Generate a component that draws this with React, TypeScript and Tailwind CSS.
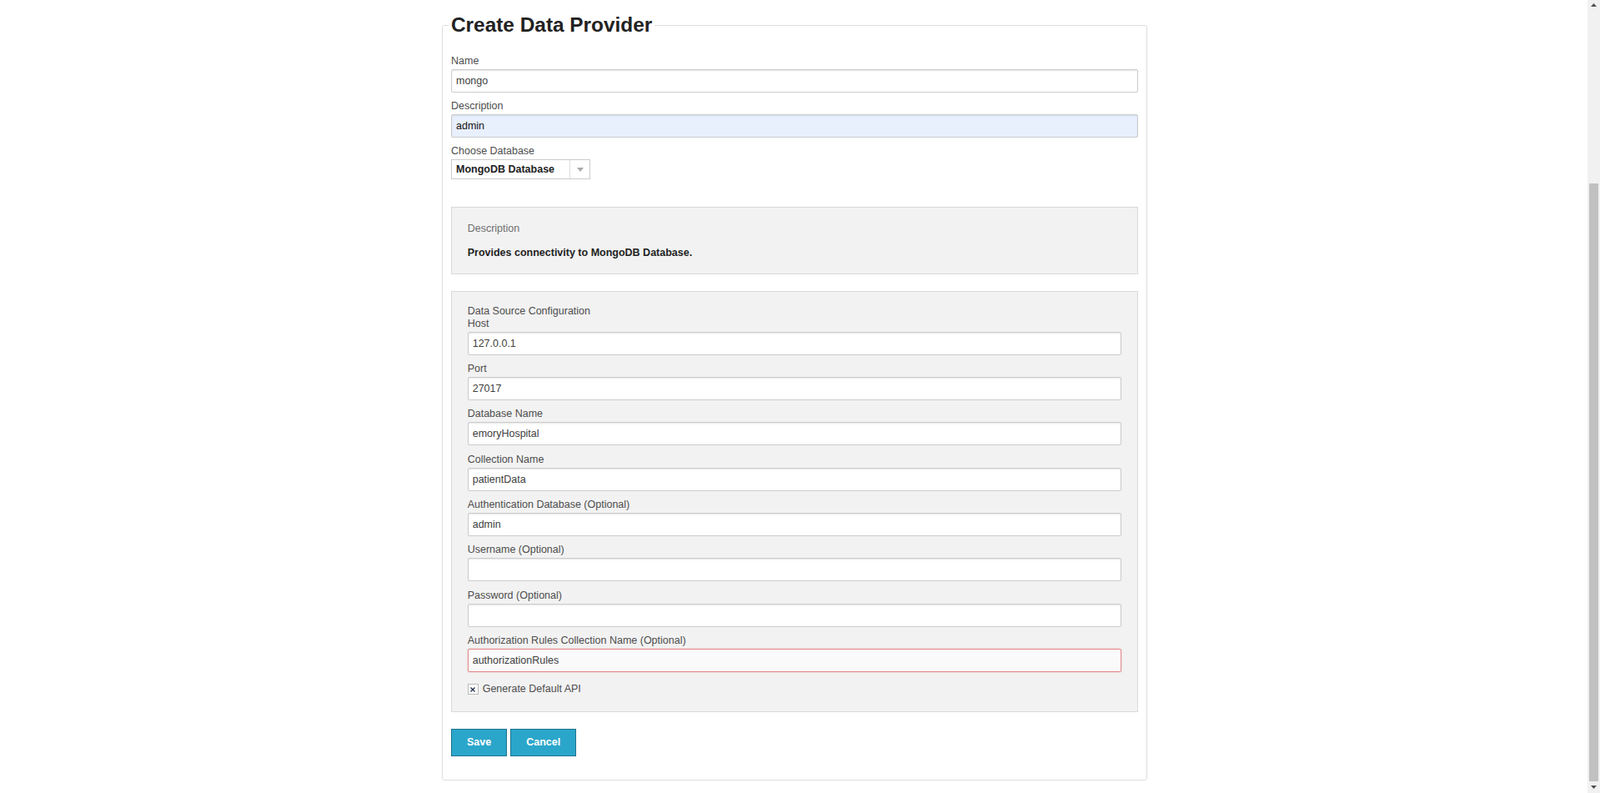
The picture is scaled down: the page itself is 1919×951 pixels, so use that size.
import React from 'react';

const fields = [
  { label: 'Host', value: '127.0.0.1' },
  { label: 'Port', value: '27017' },
  { label: 'Database Name', value: 'emoryHospital' },
  { label: 'Collection Name', value: 'patientData' },
  { label: 'Authentication Database (Optional)', value: 'admin' },
  { label: 'Username (Optional)', value: '' },
  { label: 'Password (Optional)', value: '' },
  { label: 'Authorization Rules Collection Name (Optional)', value: 'authorizationRules', error: true },
];

function Field({ label, value, error, autofill }: { label: string; value: string; error?: boolean; autofill?: boolean }) {
  let inputStyle = 'border-[#cccccc] bg-white text-[#404040] shadow-[inset_0_1px_2px_rgba(0,0,0,0.1)]';
  if (autofill) inputStyle = 'border-[#cccccc] bg-[#e8f0fe] text-[#111111] shadow-[inset_0_1px_2px_rgba(0,0,0,0.1)]';
  if (error) inputStyle = 'border-[#e28a8a] bg-[#fafafa] text-[#404040] shadow-[0_0_2px_rgba(226,138,138,0.6)]';

  return (
    <div className="mb-[9.3px]">
      <label className="mb-[2px] block text-[12.5px] leading-[15px] text-[#4d4d4d]">{label}</label>
      <input
        readOnly
        defaultValue={value}
        className={`block h-[28px] w-full rounded-[2px] border px-[5px] text-[12.5px] outline-none ${inputStyle}`}
      />
    </div>
  );
}

function Scrollbar() {
  return (
    <div className="flex h-screen w-[15px] shrink-0 flex-col items-center bg-[#f1f1f1]">
      <svg width="9" height="15" viewBox="0 0 9 15" className="shrink-0">
        <path d="M1 8 L4.5 4 L8 8 Z" fill="#505050" />
      </svg>
      <div className="mt-[205px] h-[717px] w-[11px] bg-[#c1c1c1]" />
      <div className="flex-1" />
      <svg width="9" height="14" viewBox="0 0 9 14" className="shrink-0">
        <path d="M1 5 L8 5 L4.5 9 Z" fill="#505050" />
      </svg>
    </div>
  );
}

export default function App() {
  return (
    <div className="flex h-screen overflow-hidden bg-white font-['Liberation_Sans',Arial,sans-serif]">
      <div className="flex-1 pl-[2px]">
        <fieldset className="mx-auto mt-[16px] w-[846px] rounded-[3px] border border-[#dddddd] px-[10px] pt-[21.7px] pb-[28.5px]">
          <legend className="-ml-[3px] px-[3px] text-[24.4px] leading-[28px] font-bold text-[#222222]">
            Create Data Provider
          </legend>

          <Field label="Name" value="mongo" />
          <Field label="Description" value="admin" autofill />

          <label className="mb-[2px] block text-[12.5px] leading-[15px] text-[#4d4d4d]">Choose Database</label>
          <div className="flex h-[24px] w-[167px] items-center border border-[#cccccc] bg-white">
            <span className="flex-1 pl-[5px] text-[12.5px] font-bold text-[#222222]">MongoDB Database</span>
            <div className="flex h-full w-[24px] items-center justify-center border-l border-[#dddddd]">
              <svg width="8" height="5" viewBox="0 0 8 5">
                <path d="M0 0 L8 0 L4 5 Z" fill="#aaaaaa" />
              </svg>
            </div>
          </div>

          <div className="mt-[33px] border border-[#d9d9d9] bg-[#f2f2f2] px-[18.7px] pt-[18px] pb-[17px]">
            <div className="text-[12.5px] leading-[15px] text-[#6f6f6f]">Description</div>
            <div className="mt-[14px] text-[12.5px] leading-[15px] font-bold text-[#222222]">
              Provides connectivity to MongoDB Database.
            </div>
          </div>

          <div className="mt-[20px] border border-[#d9d9d9] bg-[#f2f2f2] px-[18.7px] pt-[15.5px] pb-[19px]">
            <div className="text-[12.5px] leading-[15px] text-[#4d4d4d]">Data Source Configuration</div>
            {fields.map((f) => (
              <Field key={f.label} label={f.label} value={f.value} error={f.error} />
            ))}
            <div className="pt-[4px]">
              <div className="flex h-[15px] items-center gap-[5px]">
                <span className="flex h-[13px] w-[13px] items-center justify-center border border-[#bbbbbb] bg-white">
                  <svg width="6" height="6" viewBox="0 0 6 6">
                    <path d="M0.5 0.5 L5.5 5.5 M5.5 0.5 L0.5 5.5" stroke="#1c2a4a" strokeWidth="1.2" />
                  </svg>
                </span>
                <span className="text-[12.5px] leading-[15px] text-[#4d4d4d]">Generate Default API</span>
              </div>
            </div>
          </div>

          <div className="mt-[20px] flex gap-[4px]">
            <button className="h-[32.5px] border border-[#1e728c] bg-[#2ba6cb] px-[18px] text-[12.5px] font-bold text-white">
              Save
            </button>
            <button className="h-[32.5px] border border-[#1e728c] bg-[#2ba6cb] px-[18px] text-[12.5px] font-bold text-white">
              Cancel
            </button>
          </div>
        </fieldset>
      </div>
      <Scrollbar />
    </div>
  );
}
